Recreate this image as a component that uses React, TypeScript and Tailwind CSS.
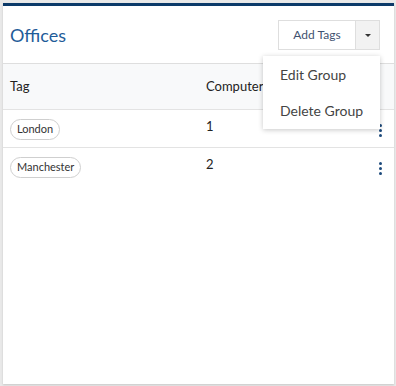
import React from "react";

interface GroupRow {
  tag: string;
  computers: number;
}

const rows: GroupRow[] = [
  { tag: "London", computers: 1 },
  { tag: "Manchester", computers: 2 },
];

const Kebab: React.FC = () => (
  <div className="flex flex-col items-center gap-[2px]">
    <span className="w-[3px] h-[3px] rounded-full bg-[#1d4a7c]" />
    <span className="w-[3px] h-[3px] rounded-full bg-[#1d4a7c]" />
    <span className="w-[3px] h-[3px] rounded-full bg-[#1d4a7c]" />
  </div>
);

const App: React.FC = () => {
  const [menuOpen] = React.useState(true);

  return (
    <div
      className="w-[396px] h-[386px] bg-[#e9e9e9] pl-[3px] pt-[3px] pr-[2px] pb-[2px]"
      style={{ fontFamily: "Lato, 'Open Sans', sans-serif" }}
    >
      <div className="relative flex flex-col h-full bg-white border-t-[3px] border-[#0c3a69] shadow-[0_1px_2px_rgba(0,0,0,0.15)]">
        {/* header */}
        <div className="flex items-center justify-between h-[57px] pl-[7px] pr-[14px]">
          <h1 className="text-[18px] text-[#1f5c99] leading-none">Offices</h1>
          <div className="flex h-[30px] mt-[1px]">
            <button className="w-[78px] border border-[#dedede] bg-white text-[12px] text-[#3f5270]">
              Add Tags
            </button>
            <button className="w-[24px] border border-l-0 border-[#dedede] bg-[#f2f2f2] flex items-center justify-center">
              <span className="block w-0 h-0 border-l-[3px] border-r-[3px] border-t-[3px] border-l-transparent border-r-transparent border-t-[#333]" />
            </button>
          </div>
        </div>

        {/* table */}
        <div className="border-t border-[#dedede]">
          <div className="flex items-center h-[45px] bg-[#f8f9fa] pl-[7px] text-[13px] text-[#222]">
            <div className="w-[196px]">Tag</div>
            <div>Computers</div>
          </div>
          {rows.map((row) => (
            <div
              key={row.tag}
              className="flex items-center h-[38px] border-t border-[#e3e3e3] pl-[7px] pr-[12px]"
            >
              <div className="w-[196px] -mt-[2px]">
                <span className="inline-flex items-center h-[21px] px-[6px] rounded-full border border-[#cfcfcf] text-[11px] text-[#333]">
                  {row.tag}
                </span>
              </div>
              <div className="flex-1 text-[13px] text-[#222] -mt-[3px]">{row.computers}</div>
              <div className="mt-[3px]">
                <Kebab />
              </div>
            </div>
          ))}
        </div>

        {menuOpen && (
          <div className="absolute left-[260px] top-[50px] w-[117px] h-[73px] bg-white shadow-[0_1px_5px_rgba(0,0,0,0.22)] flex flex-col justify-center text-[14px] text-[#444]">
            <div className="h-[36px] flex items-center pl-[17px]">Edit Group</div>
            <div className="h-[36px] flex items-center pl-[17px]">Delete Group</div>
          </div>
        )}
      </div>
    </div>
  );
};

export default App;
